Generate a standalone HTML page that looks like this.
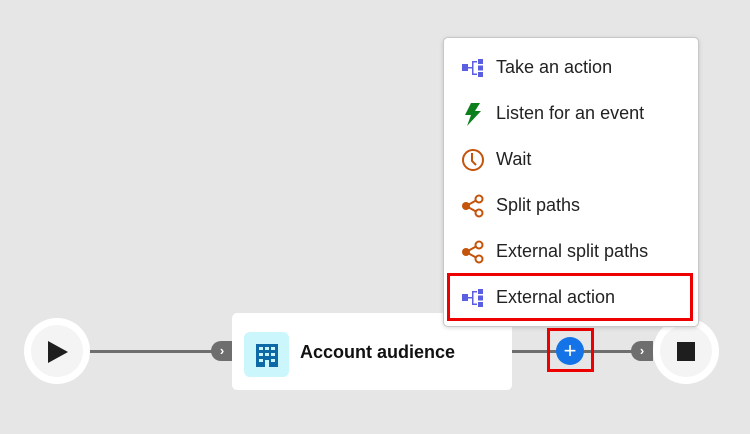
<!DOCTYPE html>
<html><head><style>
body{margin:0;width:750px;height:434px;background:#e6e6e6;position:relative;overflow:hidden;font-family:"Liberation Sans",sans-serif}
.a{position:absolute}
.line{position:absolute;height:3px;background:#6e6e6e;top:350px}
.circ{position:absolute;width:66px;height:66px;border-radius:50%;background:#fff;top:318px}
.circ .in{position:absolute;left:7px;top:7px;width:52px;height:52px;border-radius:50%;background:#f4f4f4}
.chev{position:absolute;top:341px;width:22px;height:20px;border-radius:10px 0 0 10px;background:#6e6e6e;color:#fff;font-size:13px;line-height:20px;text-align:center;font-weight:bold}
.menu{position:absolute;left:443px;top:37px;width:254px;height:288px;background:#fff;border:1px solid #c8c8c8;border-radius:5px;box-shadow:0 1px 4px rgba(0,0,0,.15)}
.it{position:absolute;left:52px;font-size:18px;color:#222;line-height:22px}
.ic{position:absolute;left:17px}
</style></head><body>
<div class="line" style="left:88px;width:126px"></div>
<div class="line" style="left:510px;width:124px"></div>
<div class="circ" style="left:24px"><div class="in"></div>
<svg class="a" style="left:23px;top:22px" width="22" height="24"><path d="M1 1 L21 12 L1 23Z" fill="#1e1e1e"/></svg></div>
<div class="circ" style="left:653px"><div class="in"></div><div class="a" style="left:24px;top:24px;width:18px;height:19px;background:#1e1e1e"></div></div>
<div class="chev" style="left:211px">›</div>
<div class="chev" style="left:631px">›</div>
<div class="a" style="left:232px;top:313px;width:280px;height:77px;background:#fff;border-radius:5px"></div>
<div class="a" style="left:244px;top:332px;width:45px;height:45px;background:#cbf6fc;border-radius:6px"></div>
<svg class="a" style="left:256px;top:344px" width="22" height="23"><rect x="0" y="0" width="22" height="23" fill="#0e6aa6"/>
<g fill="#cbf6fc"><rect x="3" y="3" width="4" height="3"/><rect x="9" y="3" width="4" height="3"/><rect x="15" y="3" width="4" height="3"/><rect x="3" y="9" width="4" height="3"/><rect x="9" y="9" width="4" height="3"/><rect x="15" y="9" width="4" height="3"/><rect x="3" y="15" width="4" height="3"/><rect x="15" y="15" width="4" height="3"/><rect x="9" y="16" width="4" height="7"/></g></svg>
<div class="a" style="left:300px;top:342px;font-size:18px;font-weight:bold;color:#111">Account audience</div>
<div class="a" style="left:547px;top:328px;width:41px;height:38px;border:3px solid #e00"></div>
<div class="a" style="left:556px;top:337px;width:28px;height:28px;border-radius:50%;background:#1473e6;color:#fff;font-size:22px;line-height:27px;text-align:center">+</div>
<div class="menu">
<svg class="ic" style="top:20px" width="24" height="20"><g fill="#5a5ee0"><rect x="1" y="6" width="6" height="7"/><rect x="7" y="9" width="5" height="1.5"/><rect x="11" y="3" width="1.5" height="14"/><rect x="11" y="3" width="5" height="1.5"/><rect x="11" y="15.5" width="5" height="1.5"/><rect x="17" y="1" width="5" height="5"/><rect x="17" y="7.5" width="5" height="5"/><rect x="17" y="14" width="5" height="5"/></g></svg>
<div class="it" style="top:18px">Take an action</div>
<svg class="ic" style="top:64px" width="24" height="24"><path d="M10 1 L19 1 L14 9 L20 9 L6 24 L10 13 L4 13Z" fill="#0d7f1c"/></svg>
<div class="it" style="top:64px">Listen for an event</div>
<svg class="ic" style="top:110px" width="24" height="24"><circle cx="12" cy="12" r="10" fill="none" stroke="#c4530b" stroke-width="2"/><path d="M11 5 L11 13 L15 17" fill="none" stroke="#c4530b" stroke-width="2"/></svg>
<div class="it" style="top:110px">Wait</div>
<svg class="ic" style="top:156px" width="24" height="24"><g stroke="#c4530b" stroke-width="2" fill="none"><circle cx="18" cy="5" r="3.5"/><circle cx="18" cy="19" r="3.5"/><path d="M5 12 L15 6.5 M5 12 L15 17.5"/></g><circle cx="5" cy="12" r="4" fill="#c4530b"/></svg>
<div class="it" style="top:156px">Split paths</div>
<svg class="ic" style="top:202px" width="24" height="24"><g stroke="#c4530b" stroke-width="2" fill="none"><circle cx="18" cy="5" r="3.5"/><circle cx="18" cy="19" r="3.5"/><path d="M5 12 L15 6.5 M5 12 L15 17.5"/></g><circle cx="5" cy="12" r="4" fill="#c4530b"/></svg>
<div class="it" style="top:202px">External split paths</div>
<svg class="ic" style="top:250px" width="24" height="20"><g fill="#5a5ee0"><rect x="1" y="6" width="6" height="7"/><rect x="7" y="9" width="5" height="1.5"/><rect x="11" y="3" width="1.5" height="14"/><rect x="11" y="3" width="5" height="1.5"/><rect x="11" y="15.5" width="5" height="1.5"/><rect x="17" y="1" width="5" height="5"/><rect x="17" y="7.5" width="5" height="5"/><rect x="17" y="14" width="5" height="5"/></g></svg>
<div class="it" style="top:248px">External action</div>
<div class="a" style="left:3px;top:235px;width:240px;height:42px;border:3px solid #e00"></div>
</div>
</body></html>
